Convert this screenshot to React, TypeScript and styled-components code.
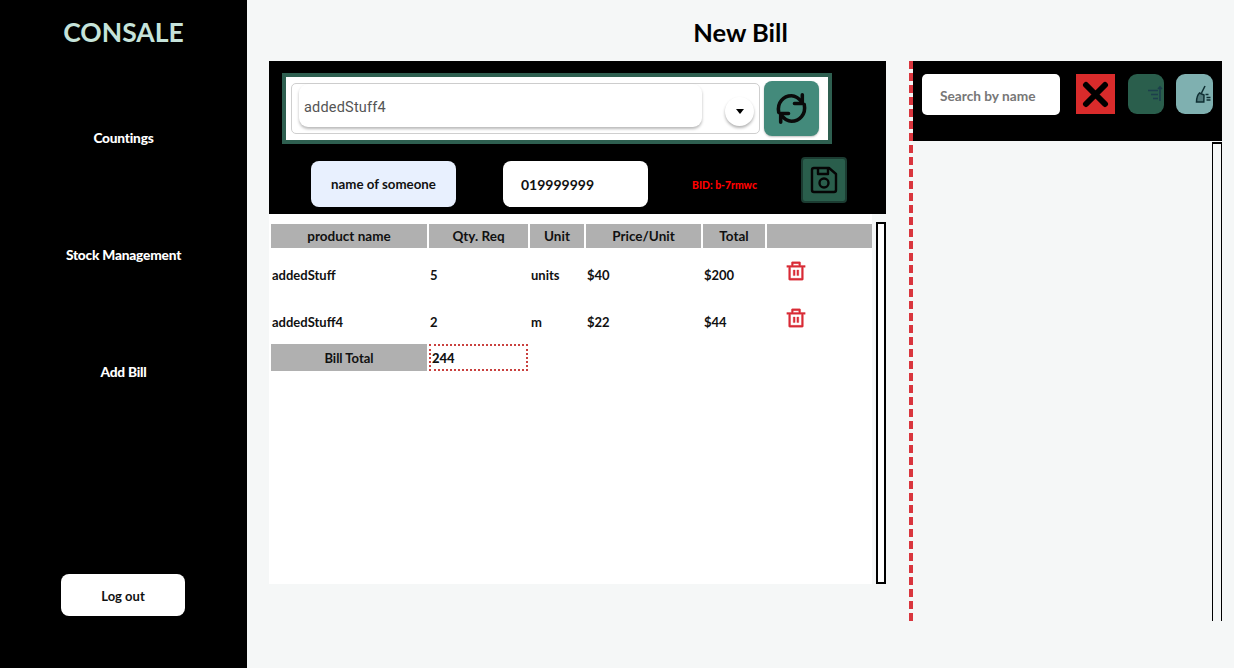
import React from "react";
import styled, { createGlobalStyle } from "styled-components";
import { RiDeleteBinLine } from "react-icons/ri";

const Global = createGlobalStyle`
  html, body { margin: 0; padding: 0; }
  body { font-family: "Lato", "Liberation Sans", sans-serif; background: #f5f7f7; }
  * { box-sizing: border-box; }
`;

const Page = styled.div`
  display: flex;
  width: 1234px;
  height: 668px;
  overflow: hidden;
`;

const Sidebar = styled.nav`
  width: 247px;
  flex: none;
  background: #000;
  display: flex;
  flex-direction: column;
  align-items: center;
  padding-top: 14px;
`;

const Logo = styled.div`
  color: #c6e3da;
  font-size: 26.5px;
  line-height: 36px;
  font-weight: 700;
  margin-bottom: 71px;
`;

const NavItem = styled.a`
  color: #fff;
  font-size: 13.7px;
  font-weight: 900;
  line-height: 34px;
  height: 34px;
  margin-bottom: 83px;
  letter-spacing: -0.2px;
`;

const LogoutButton = styled.button`
  width: 124px;
  height: 42px;
  margin-top: auto;
  margin-right: 1px;
  margin-bottom: 52px;
  background: #fff;
  border: none;
  border-radius: 8px;
  color: #111;
  padding: 2px 0 0;
  font: 700 13px "Lato", sans-serif;
`;

const Main = styled.main`
  flex: 1;
  display: flex;
  flex-direction: column;
  min-width: 0;
`;

const Title = styled.h1`
  margin: 0;
  height: 61px;
  padding-top: 15px;
  text-align: center;
  font-size: 25.5px;
  line-height: 34px;
  font-weight: 700;
  color: #000;
`;

const Columns = styled.div`
  display: flex;
  padding-left: 22px;
`;

const BillColumn = styled.section`
  width: 617px;
  flex: none;
`;

const BillHeader = styled.div`
  background: #000;
  height: 153px;
  padding: 12px 13px 0;
`;

const ComboFrame = styled.div`
  width: 550px;
  height: 71px;
  background: #fff;
  border: 4px solid #2e5f50;
  padding: 6px 5px;
  display: flex;
  align-items: flex-start;
  gap: 4px;
`;

const ComboOutline = styled.div`
  width: 469px;
  height: 51px;
  border: 1px solid #cfcfcf;
  border-radius: 5px;
  display: flex;
  align-items: flex-start;
  padding-left: 7px;
`;

const ComboValue = styled.div`
  width: 403px;
  height: 43px;
  border-radius: 9px;
  box-shadow: 0 2px 3px rgba(0, 0, 0, 0.28);
  font: 400 14.5px/48px "Roboto", sans-serif;
  color: #555;
  padding-left: 5px;
  letter-spacing: 0.2px;
`;

const CaretButton = styled.div`
  width: 29px;
  height: 29px;
  margin: 13px 0 0 23px;
  border-radius: 50%;
  background: #fff;
  box-shadow: 0 2px 3px rgba(0, 0, 0, 0.3);
  display: flex;
  align-items: center;
  justify-content: center;
  &::after {
    content: "";
    border-left: 4.5px solid transparent;
    border-right: 4.5px solid transparent;
    border-top: 5px solid #000;
  }
`;

const RefreshButton = styled.button`
  width: 55px;
  height: 55px;
  flex: none;
  margin-top: -2px;
  background: #438a7b;
  border: none;
  border-radius: 8px;
  padding: 0;
  display: flex;
  align-items: center;
  justify-content: center;
  box-shadow: 0 1px 2px rgba(0, 0, 0, 0.25);
`;

const DetailsRow = styled.div`
  display: flex;
  align-items: flex-start;
  margin-top: 13px;
  padding-left: 29px;
`;

const Field = styled.div<{ $filled?: boolean; $center?: boolean }>`
  width: 145px;
  height: 46px;
  flex: none;
  margin-top: 4px;
  margin-right: ${(p) => (p.$center ? 47 : 44)}px;
  border-radius: 8px;
  background: ${(p) => (p.$filled ? "#e8f0fe" : "#fff")};
  color: #111;
  font-size: ${(p) => (p.$center ? 13.3 : 14)}px;
  font-weight: 700;
  line-height: 47px;
  text-align: ${(p) => (p.$center ? "center" : "left")};
  padding-left: ${(p) => (p.$center ? 0 : 18)}px;
`;

const BidLabel = styled.span`
  width: 109px;
  flex: none;
  margin-top: 4px;
  color: #f00;
  font-size: 10.4px;
  font-weight: 900;
  line-height: 48px;
`;

const SaveButton = styled.button`
  width: 46px;
  height: 46px;
  flex: none;
  background: #2a5e4c;
  border: 2px solid #1c3c32;
  border-radius: 4px;
  padding: 0;
  display: flex;
  align-items: center;
  justify-content: center;
`;

const TableArea = styled.div`
  height: 370px;
  display: flex;
`;

const TablePanel = styled.div`
  width: 603px;
  flex: none;
  background: #fff;
  padding-top: 8px;
`;

const BillTable = styled.table`
  width: 605px;
  table-layout: fixed;
  border-collapse: separate;
  border-spacing: 2px;
  color: #111;
  font-size: 13px;
  font-weight: 700;
`;

const HeadCell = styled.th`
  height: 24px;
  padding: 0;
  background: #b0b0b0;
  font-weight: 700;
  font-size: 13.5px;
  color: #111;
`;

const Cell = styled.td`
  height: 45px;
  padding: 4px 0 0 1px;
  font-size: 13px;
`;

const IconCell = styled.td`
  height: 45px;
  padding: 0 0 4px 18px;
  color: #d92b36;
  svg {
    display: block;
    stroke: currentColor;
    stroke-width: 0.4px;
  }
`;

const TotalLabel = styled.td`
  height: 27px;
  padding: 0;
  background: #b0b0b0;
  text-align: center;
`;

const TotalValue = styled.td`
  height: 27px;
  padding: 0 0 0 1px;
  border: 2px dotted #c9413f;
  font-weight: 900;
`;

const TableScroll = styled.div`
  width: 10px;
  flex: none;
  margin: 8px 0 0 4px;
  background: #fff;
  border: 2px solid #000;
`;

const ResultsColumn = styled.section`
  margin-left: 23px;
  width: 313px;
  flex: none;
  height: 560px;
  border-left: 4px dashed #d9363e;
  display: flex;
  flex-direction: column;
`;

const ResultsHeader = styled.div`
  width: 309px;
  height: 80px;
  flex: none;
  background: #000;
  display: flex;
  align-items: flex-start;
  padding: 13px 0 0 9px;
`;

const SearchInput = styled.div`
  width: 138px;
  height: 41px;
  flex: none;
  background: #fff;
  border-radius: 5px;
  color: #777;
  font-size: 13.7px;
  font-weight: 700;
  line-height: 43px;
  padding-left: 18px;
  margin-right: 16px;
`;

const ClearButton = styled.button`
  width: 39px;
  height: 40px;
  flex: none;
  background: #d92b2b;
  border: none;
  padding: 0;
  margin-right: 13px;
  display: flex;
  align-items: center;
  justify-content: center;
`;

const ToolButton = styled.button<{ $bg: string; $gap: number }>`
  width: ${(p) => (p.$gap ? 36 : 37)}px;
  height: 40px;
  flex: none;
  margin-right: ${(p) => p.$gap}px;
  background: ${(p) => p.$bg};
  border: none;
  border-radius: 9px;
  padding: 0 1px 0 0;
  display: flex;
  align-items: center;
  justify-content: flex-end;
`;

const ResultsBody = styled.div`
  flex: 1;
  width: 309px;
  display: flex;
  justify-content: flex-end;
`;

const ResultsScroll = styled.div`
  width: 10px;
  margin-top: 1px;
  border: 2px solid #000;
  border-bottom: none;
  border-left-width: 1.5px;
  border-right-width: 1.5px;
`;

const rows = [
  { name: "addedStuff", qty: "5", unit: "units", price: "$40", total: "$200" },
  { name: "addedStuff4", qty: "2", unit: "m", price: "$22", total: "$44" },
];

const heads = ["product name", "Qty. Req", "Unit", "Price/Unit", "Total", ""];
const widths = [156, 99, 54, 115, 62, 105];

export default function App() {
  return (
    <Page>
      <Global />
      <Sidebar>
        <Logo>CONSALE</Logo>
        <NavItem>Countings</NavItem>
        <NavItem>Stock Management</NavItem>
        <NavItem>Add Bill</NavItem>
        <LogoutButton>Log out</LogoutButton>
      </Sidebar>
      <Main>
        <Title>New Bill</Title>
        <Columns>
          <BillColumn>
            <BillHeader>
              <ComboFrame>
                <ComboOutline>
                  <ComboValue>addedStuff4</ComboValue>
                  <CaretButton />
                </ComboOutline>
                <RefreshButton>
                  <svg width="55" height="55" viewBox="0 0 56 56" fill="none" stroke="#0a0a0a" strokeWidth="3.6" strokeLinecap="round" strokeLinejoin="round">
                    <path d="M15 32C13 22 20 15 28 15C33 15 36 18 39 22" />
                    <path d="M39 14V23H31" />
                    <path d="M41 24C43 34 36 41 28 41C23 41 20 38 17 34" />
                    <path d="M17 42V33H25" />
                  </svg>
                </RefreshButton>
              </ComboFrame>
              <DetailsRow>
                <Field $filled $center>name of someone</Field>
                <Field>019999999</Field>
                <BidLabel>BID: b-7rmwc</BidLabel>
                <SaveButton>
                  <svg width="42" height="42" viewBox="3 4 42 42" fill="none" stroke="#050505" strokeWidth="2.4" strokeLinejoin="round">
                    <path d="M14 13H29L36 19V35A2 2 0 0 1 34 37H14A2 2 0 0 1 12 35V15A2 2 0 0 1 14 13Z" />
                    <path d="M18 13V19H28V13" />
                    <circle cx="24" cy="28" r="4.500" />
                  </svg>
                </SaveButton>
              </DetailsRow>
            </BillHeader>
            <TableArea>
              <TablePanel>
                <BillTable>
                  <colgroup>
                    {widths.map((w, i) => (
                      <col key={i} style={{ width: w }} />
                    ))}
                  </colgroup>
                  <thead>
                    <tr>
                      {heads.map((h, i) => (
                        <HeadCell key={i}>{h}</HeadCell>
                      ))}
                    </tr>
                  </thead>
                  <tbody>
                    {rows.map((r) => (
                      <tr key={r.name}>
                        <Cell>{r.name}</Cell>
                        <Cell>{r.qty}</Cell>
                        <Cell>{r.unit}</Cell>
                        <Cell>{r.price}</Cell>
                        <Cell>{r.total}</Cell>
                        <IconCell>
                          <RiDeleteBinLine size={22} />
                        </IconCell>
                      </tr>
                    ))}
                    <tr>
                      <TotalLabel>Bill Total</TotalLabel>
                      <TotalValue>244</TotalValue>
                    </tr>
                  </tbody>
                </BillTable>
              </TablePanel>
              <TableScroll />
            </TableArea>
          </BillColumn>
          <ResultsColumn>
            <ResultsHeader>
              <SearchInput>Search by name</SearchInput>
              <ClearButton>
                <svg width="27" height="27" viewBox="0 0 27 27">
                  <path d="M4 4 L23 23 M23 4 L4 23" stroke="#000" strokeWidth="6" strokeLinecap="round" />
                </svg>
              </ClearButton>
              <ToolButton $bg="#2a5e4c" $gap={12}>
                <svg width="18" height="18" viewBox="0 0 18 18" fill="none" stroke="#1c3f4c" strokeWidth="1.6">
                  <path d="M3 5.500h10M6 9.500h7M8 13.500h5M15 16V2M13 4 15 2l2 2" />
                </svg>
              </ToolButton>
              <ToolButton $bg="#7fb0b0" $gap={0}>
                <svg width="17" height="19" viewBox="0 0 17 19" fill="none" stroke="#0f2f33" strokeWidth="1.5">
                  <path d="M10 1 6.500 8" />
                  <path d="M4.500 8 9 10l-.2 7H1.500c0-4 1-7 3-9z" fill="#0f2f33" fillOpacity="0.4" />
                  <path d="M10.500 9.500h3M11.500 12.500h4M11.500 15h4" />
                </svg>
              </ToolButton>
            </ResultsHeader>
            <ResultsBody>
              <ResultsScroll />
            </ResultsBody>
          </ResultsColumn>
        </Columns>
      </Main>
    </Page>
  );
}
